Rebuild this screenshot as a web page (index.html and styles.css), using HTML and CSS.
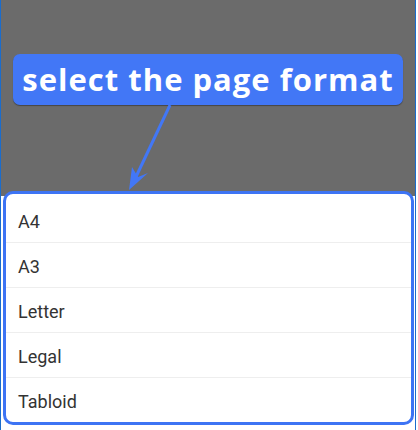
FILE: index.html
```html
<!DOCTYPE html>
<html lang="en">
<head>
    <meta charset="UTF-8">
    <meta name="viewport" content="width=device-width, initial-scale=1.0">
    <title>Page format</title>
    <link rel="stylesheet" href="styles.css">
</head>
<body>
    <div class="screen">
        <div class="hint">select the page format</div>
        <svg class="pointer" width="414" height="86" viewBox="0 0 414 86">
            <line x1="169" y1="0" x2="133" y2="76" stroke="#4277f6" stroke-width="3"/>
            <polygon points="128,85 131,62 137,72 147,68" fill="#4277f6"/>
        </svg>
        <ul class="formats">
            <li>A4</li>
            <li>A3</li>
            <li>Letter</li>
            <li>Legal</li>
            <li>Tabloid</li>
        </ul>
    </div>
</body>
</html>
```

FILE: styles.css
```css
html, body {
    margin: 0;
    padding: 0;
    background: #fff;
    overflow: hidden;
}
.screen {
    width: 414px;
    height: 430px;
    border-left: 1px solid #1a6ccc;
    border-right: 1px solid #1a6ccc;
    background: linear-gradient(#6b6b6b 0 196px, #fff 196px);
    display: flex;
    flex-direction: column;
    font-family: Roboto, "Liberation Sans", sans-serif;
}
.hint {
    margin: 54px 0 0 12px;
    width: 390px;
    height: 51px;
    box-sizing: border-box;
    background: #4277f6;
    border-radius: 7px;
    box-shadow: 0 1px 1px rgba(0,0,0,0.35);
    color: #fff;
    font-family: "Open Sans", Lato, sans-serif;
    font-weight: 700;
    font-size: 31px;
    letter-spacing: 1px;
    white-space: nowrap;
    display: flex;
    align-items: center;
    justify-content: center;
    padding-bottom: 2px;
}
.pointer {
    display: block;
}
.formats {
    list-style: none;
    margin: 0 1px 0 2px;
    padding: 4px 0;
    height: 234px;
    box-sizing: border-box;
    border: 3px solid #3d74f4;
    border-radius: 10px;
    background: #fff;
    overflow: hidden;
}
.formats li {
    height: 44px;
    line-height: 47px;
    overflow: hidden;
    padding-left: 12px;
    font-size: 18px;
    color: #333;
    border-bottom: 1px solid #eee;
}
.formats li:last-child {
    border-bottom: none;
}
```
